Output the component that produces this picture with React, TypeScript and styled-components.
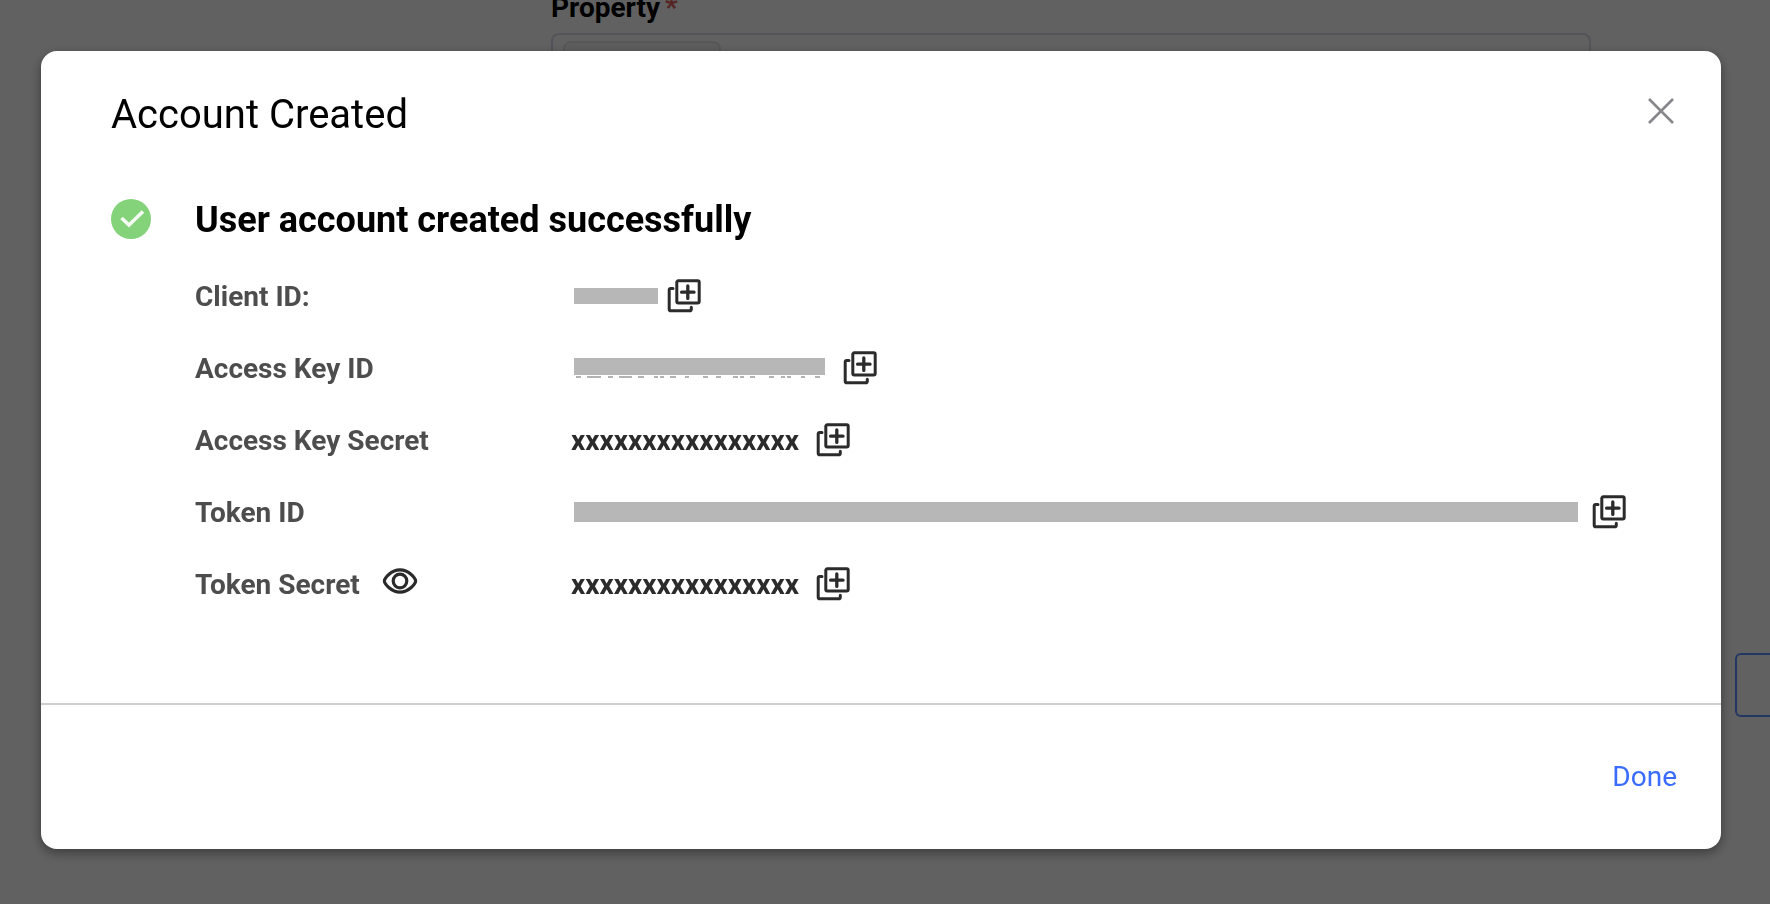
import React from 'react';
import styled, { createGlobalStyle } from 'styled-components';

const GlobalStyle = createGlobalStyle`
  * { box-sizing: border-box; }
  html, body { margin: 0; padding: 0; }
  body {
    background: #fff;
    color: #000;
    font-family: Roboto, "Liberation Sans", sans-serif;
    font-size: 28px;
    overflow: hidden;
  }
  button { font: inherit; color: inherit; background: none; border: 0; padding: 0; cursor: pointer; }
`;

const Page = styled.main`
  display: flex;
  flex-direction: column;
  min-height: 100vh;
  overflow: hidden;
`;

const FormField = styled.div`
  margin: 0 179px 0 551px;
`;

const FieldLabel = styled.div`
  height: 33px;
  display: flex;
  align-items: flex-end;
  gap: 5px;
  padding-bottom: 9px;
  font-weight: 700;
  line-height: 32px;
`;

const Required = styled.span`
  color: #e0605c;
`;

const FieldBox = styled.div`
  height: 80px;
  padding: 6px 10px;
  border: 2px solid #dadaea;
  border-radius: 8px;
`;

const Tag = styled.div`
  width: 158px;
  height: 60px;
  border: 2px solid #e4e4e4;
  border-radius: 8px;
  background: #f5f5f5;
`;

const OutlineButton = styled.button`
  && {
    align-self: flex-end;
    width: 35px;
    height: 64px;
    margin-top: 540px;
    border: 2px solid #5990ff;
    border-right: 0;
    border-radius: 6px 0 0 6px;
  }
`;

const Overlay = styled.div`
  position: fixed;
  inset: 0;
  padding: 51px 49px 55px 41px;
  background: rgba(0, 0, 0, 0.62);
`;

const Dialog = styled.section`
  display: flex;
  flex-direction: column;
  border-radius: 16px;
  background: #fff;
  box-shadow: 0 4px 12px rgba(0, 0, 0, 0.4);
`;

const DialogHeader = styled.header`
  display: flex;
  align-items: flex-start;
  justify-content: space-between;
  padding: 40px 44px 0 70px;
`;

const Title = styled.h1`
  margin: 0;
  font-size: 40px;
  font-weight: 400;
  line-height: 48px;
`;

const CloseButton = styled.button`
  && {
    display: flex;
    padding: 4px 0;
  }
`;

const DialogBody = styled.div`
  display: grid;
  grid-template-columns: 84px 1fr;
  padding: 60px 70px 83px;
`;

const Heading = styled.h2`
  margin: 0 0 19px;
  font-size: 36px;
  font-weight: 700;
  line-height: 42px;
`;

const Details = styled.dl`
  margin: 0;
`;

const DetailRow = styled.div`
  display: flex;
  align-items: center;
  height: 72px;
`;

const DetailLabel = styled.dt`
  display: flex;
  align-items: center;
  gap: 22px;
  flex: 0 0 376px;
  color: #4d4d4d;
  font-weight: 700;
`;

const DetailValue = styled.dd`
  display: flex;
  align-items: center;
  gap: 16px;
  margin: 0;
  color: #2b2b2b;
  font-weight: 700;
`;

const Redacted = styled.span<{ $width: number; $tail: number }>`
  display: block;
  width: ${(p) => p.$width}px;
  margin: 0 ${(p) => p.$tail}px 0 3px;
`;

const RedactedBar = styled.span<{ $height: number }>`
  display: block;
  height: ${(p) => p.$height}px;
  background: #b7b7b7;
`;

const GlyphFeet = styled.svg`
  display: block;
`;

const IconButton = styled.button`
  display: flex;
`;

const RevealButton = styled(IconButton)`
  && {
    padding-bottom: 6px;
  }
`;

const DialogFooter = styled.footer`
  display: flex;
  justify-content: flex-end;
  padding: 54px 44px;
  border-top: 2px solid #cfcfcf;
`;

const DoneButton = styled.button`
  && {
    color: #3a6cff;
    line-height: 36px;
  }
`;

const CopyIcon = () => (
  <svg width="36" height="36" viewBox="0 0 36 36" fill="none" stroke="#2b2b2b" strokeWidth="3" strokeLinecap="round" strokeLinejoin="round">
    <rect x="10.8" y="2.8" width="22.4" height="22.2" rx="1.5" />
    <path d="M21.8 8v12.4M15.6 14.2H28" strokeWidth="3.3" />
    <path d="M7 10.5H4.8Q3.2 10.5 3.2 12.1V31.2Q3.2 32.8 4.8 32.8H23.7Q25.3 32.8 25.3 31.2V29.2" />
  </svg>
);

const EyeIcon = () => (
  <svg width="36" height="28" viewBox="0 0 36 28" fill="none" stroke="#2b2b2b" strokeWidth="3.2">
    <path d="M2.4 14C2.4 11.5 9 2.9 18 2.9S33.6 11.5 33.6 14S27 25.1 18 25.1S2.4 16.5 2.4 14Z" />
    <circle cx="18" cy="14" r="6.8" />
  </svg>
);

type Detail = {
  label: string;
  value?: string;
  bar?: { width: number; height: number; tail: number; feet?: string };
  revealable?: boolean;
};

const details: Detail[] = [
  { label: 'Client ID:', bar: { width: 84, height: 16, tail: -8 } },
  {
    label: 'Access Key ID',
    bar: {
      width: 251,
      height: 17,
      tail: 1,
      feet: 'M2 2h5M13 2h14M34 2h5M45 2h13M64 2h6M80 2h4M86 2h4M96 2h6M111 2h4M129 2h5M142 2h5M159 2h5M166 2h4M176 2h5M195 2h5M207 2h4M213 2h4M227 2h4M241 2h5',
    },
  },
  { label: 'Access Key Secret', value: 'xxxxxxxxxxxxxxxx' },
  { label: 'Token ID', bar: { width: 1004, height: 20, tail: -3 } },
  { label: 'Token Secret', value: 'xxxxxxxxxxxxxxxx', revealable: true },
];

export default function App() {
  return (
    <>
      <GlobalStyle />
      <Page>
        <FormField>
          <FieldLabel>
            Property<Required>*</Required>
          </FieldLabel>
          <FieldBox>
            <Tag />
          </FieldBox>
        </FormField>
        <OutlineButton aria-label="Next" />
      </Page>
      <Overlay>
        <Dialog role="dialog" aria-modal="true" aria-labelledby="dialog-title">
          <DialogHeader>
            <Title id="dialog-title">Account Created</Title>
            <CloseButton aria-label="Close">
              <svg width="32" height="32" viewBox="0 0 32 32" stroke="#86868b" strokeWidth="2.6">
                <path d="M4 4L28 28M28 4L4 28" />
              </svg>
            </CloseButton>
          </DialogHeader>
          <DialogBody>
            <svg width="40" height="40" viewBox="0 0 40 40">
              <circle cx="20" cy="20" r="20" fill="#84d27a" />
              <path d="M10.5 19L18 26L32 12.5" fill="none" stroke="#f4fbf3" strokeWidth="3.6" />
            </svg>
            <div>
              <Heading>User account created successfully</Heading>
              <Details>
                {details.map(({ label, value, bar, revealable }) => (
                  <DetailRow key={label}>
                    <DetailLabel>
                      {label}
                      {revealable && (
                        <RevealButton aria-label={`Show ${label}`}>
                          <EyeIcon />
                        </RevealButton>
                      )}
                    </DetailLabel>
                    <DetailValue>
                      {value}
                      {bar && (
                        <Redacted $width={bar.width} $tail={bar.tail}>
                          <RedactedBar $height={bar.height} />
                          {bar.feet && (
                            <GlyphFeet width={bar.width} height="3" stroke="#9a9a9a" strokeWidth="1.4">
                              <path d={bar.feet} />
                            </GlyphFeet>
                          )}
                        </Redacted>
                      )}
                      <IconButton aria-label={`Copy ${label}`}>
                        <CopyIcon />
                      </IconButton>
                    </DetailValue>
                  </DetailRow>
                ))}
              </Details>
            </div>
          </DialogBody>
          <DialogFooter>
            <DoneButton>Done</DoneButton>
          </DialogFooter>
        </Dialog>
      </Overlay>
    </>
  );
}
